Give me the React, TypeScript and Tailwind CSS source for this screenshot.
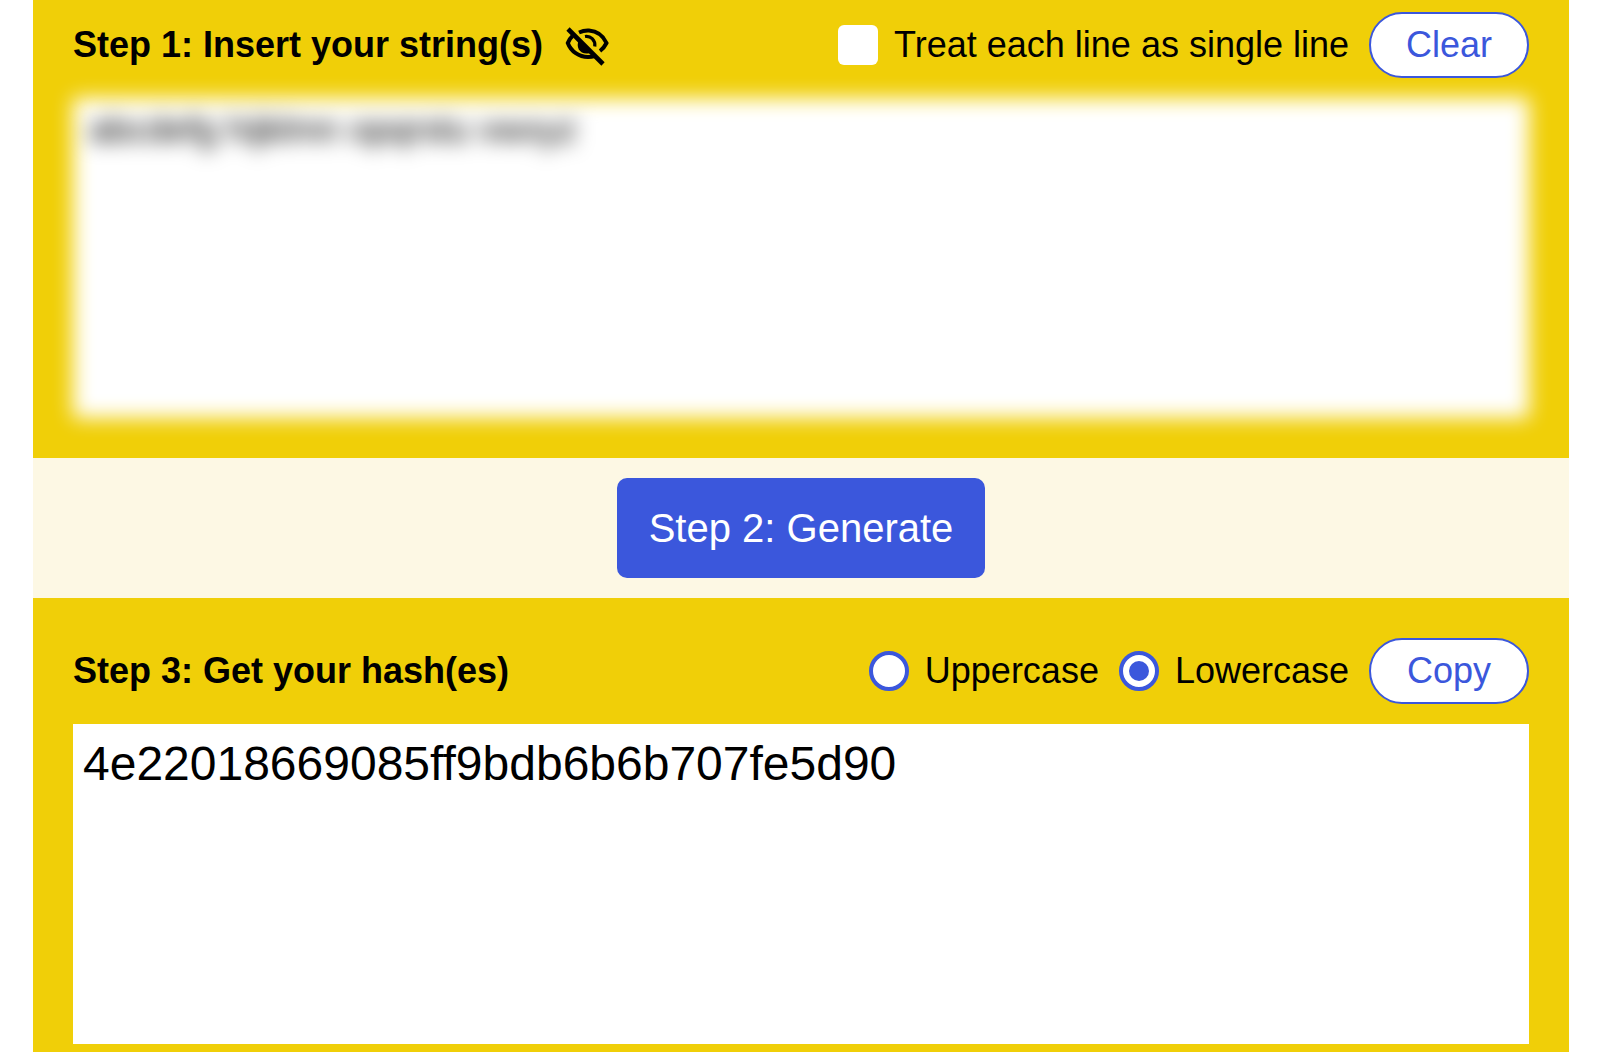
import { useState } from "react";

const pill = "h-[66px] w-40 shrink-0 rounded-full border-2 border-[#3b57dc] bg-white text-4xl text-[#3b57dc]";
const radio = "m-0 flex size-10 shrink-0 appearance-none items-center justify-center rounded-full border-4 border-[#3b57dc] bg-white checked:before:size-5 checked:before:rounded-full checked:before:bg-[#3b57dc] checked:before:content-['']";
const check = "m-0 size-10 shrink-0 appearance-none rounded-md bg-white checked:bg-[#3b57dc]";
const area = "block h-80 w-full resize-none overflow-hidden border-0 bg-white text-black outline-none";

function HiddenIcon() {
  return (
    <svg viewBox="-2 -3 46 44" className="h-11 w-[46px]" fill="none" stroke="currentColor" strokeWidth="4" aria-hidden="true">
      <path d="M3 3 L38 38" strokeWidth="4.6" />
      <path d="M14 6.5 C18 4.7 21 4.4 24 4.6 C32 5.2 38 9.5 41.5 17 C40 20 38 22.8 35 25" />
      <path d="M7.5 10 C5.3 12 3.8 14.2 2.8 17 C6 25.5 14 31 23 31 C25.5 31 27.5 30.7 29.5 30" />
      <path d="M20 10.5 C25.5 9.5 30.5 14 29.8 20.5" strokeWidth="3.2" />
      <path d="M14 14 C10.500 21 14.500 27.500 21.500 27.500 C23.500 27.500 25 27 26.500 26 Z" fill="currentColor" stroke="none" />
    </svg>
  );
}

export default function App() {
  const [text, setText] = useState("abcdefg hijklmn opqrstu vwxyz");
  const [single, setSingle] = useState(false);
  const [letterCase, setLetterCase] = useState<"upper" | "lower">("lower");
  const [hidden, setHidden] = useState(true);
  const [hash, setHash] = useState("4e22018669085ff9bdb6b6b707fe5d90");

  const shown = letterCase === "upper" ? hash.toUpperCase() : hash;

  return (
    <main className="min-h-screen bg-white pr-[31px] pl-[33px] font-['Liberation_Sans',Arial,sans-serif] text-black">
      <div className="flex min-h-screen flex-col">
        <section className="bg-[#f0cf08] px-10 pt-3 pb-10">
          <div className="mb-5 flex items-center justify-between">
            <div className="flex items-center gap-5">
              <h2 id="input-title" className="text-4xl font-bold">Step 1: Insert your string(s)</h2>
              <button type="button" aria-label="Hide input" aria-pressed={hidden} onClick={() => setHidden(!hidden)}>
                <HiddenIcon />
              </button>
            </div>
            <div className="flex items-center gap-5">
              <label className="flex items-center gap-4 text-4xl">
                <input type="checkbox" className={check} checked={single} onChange={(e) => setSingle(e.target.checked)} />
                Treat each line as single line
              </label>
              <button type="button" className={pill} onClick={() => setText("")}>Clear</button>
            </div>
          </div>
          <textarea
            aria-labelledby="input-title"
            spellCheck={false}
            value={text}
            onChange={(e) => setText(e.target.value)}
            className={`${area} px-4 py-3 text-4xl ${hidden ? "blur-[10px]" : ""}`}
          />
        </section>

        <div className="flex justify-center bg-[#fdf8e4] py-5">
          <button
            type="button"
            onClick={() => setHash(hash)}
            className="h-[100px] rounded-[10px] bg-[#3b57dc] px-8 text-[40px] text-white"
          >
            Step 2: Generate
          </button>
        </div>

        <section className="grow bg-[#f0cf08] px-10 pt-10 pb-2">
          <div className="mb-5 flex items-center justify-between">
            <h2 id="output-title" className="text-4xl font-bold">Step 3: Get your hash(es)</h2>
            <div className="flex items-center gap-5">
              <label className="flex items-center gap-4 text-4xl">
                <input type="radio" name="case" className={radio} checked={letterCase === "upper"} onChange={() => setLetterCase("upper")} />
                Uppercase
              </label>
              <label className="flex items-center gap-4 text-4xl">
                <input type="radio" name="case" className={radio} checked={letterCase === "lower"} onChange={() => setLetterCase("lower")} />
                Lowercase
              </label>
              <button type="button" className={pill} onClick={() => navigator.clipboard?.writeText(shown)}>Copy</button>
            </div>
          </div>
          <textarea
            aria-labelledby="output-title"
            readOnly
            spellCheck={false}
            value={shown}
            className={`${area} p-[10px] text-5xl leading-[60px]`}
          />
        </section>
      </div>
    </main>
  );
}
